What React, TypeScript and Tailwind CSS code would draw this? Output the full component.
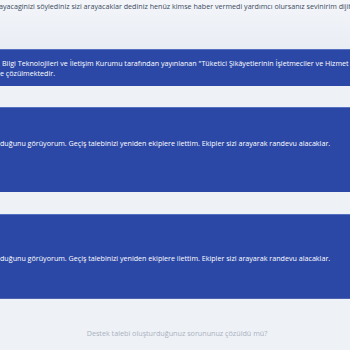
export default function App() {
  return (
    <div
      className="w-[350px] h-[350px] overflow-hidden bg-[#eef1f6] flex flex-col"
      style={{ fontFamily: '"Open Sans", "Noto Sans", sans-serif' }}
    >
      <div className="pt-[1px] h-[49px] bg-gradient-to-b from-[#f3f5f9] to-[#e9edf4]">
        <p className="whitespace-nowrap text-[7.15px] leading-[10px] text-[#3b4a5e] -ml-[1px]">
          ayacaginizi söylediniz sizi arayacaklar dediniz henüz kimse haber vermedi yardımcı olursanız sevinirim dijit
        </p>
      </div>

      <div className="h-[37px] bg-[#2c48a6] border-t border-[#5670c2] pt-[8px] text-white text-[7.15px] leading-[10px] font-medium">
        <p className="whitespace-nowrap pl-[2px]">
          Bilgi Teknolojileri ve İletişim Kurumu tarafından yayınlanan "Tüketici Şikâyetlerinin İşletmeciler ve Hizmet
        </p>
        <p className="whitespace-nowrap">e çözülmektedir.</p>
      </div>

      <div className="h-[21px]" />

      <div className="h-[85px] bg-[#2c48a6] border-t border-[#5670c2] pt-[30px] text-white text-[7.15px] leading-[10px] font-medium">
        <p className="whitespace-nowrap">
          duğunu görüyorum. Geçiş talebinizi yeniden ekiplere ilettim. Ekipler sizi arayarak randevu alacaklar.
        </p>
      </div>

      <div className="h-[22px]" />

      <div className="h-[85px] bg-[#2c48a6] border-t border-[#5670c2] border-b-[#4d63b0] border-b pt-[38px] text-white text-[7.15px] leading-[10px] font-medium">
        <p className="whitespace-nowrap">
          duğunu görüyorum. Geçiş talebinizi yeniden ekiplere ilettim. Ekipler sizi arayarak randevu alacaklar.
        </p>
      </div>

      <div className="flex-1 flex justify-center pt-[29px] pl-[4px]">
        <p className="whitespace-nowrap text-[7.2px] leading-[10px] text-[#aab1bf]">
          Destek talebi oluşturduğunuz sorununuz çözüldü mü?
        </p>
      </div>
    </div>
  );
}
